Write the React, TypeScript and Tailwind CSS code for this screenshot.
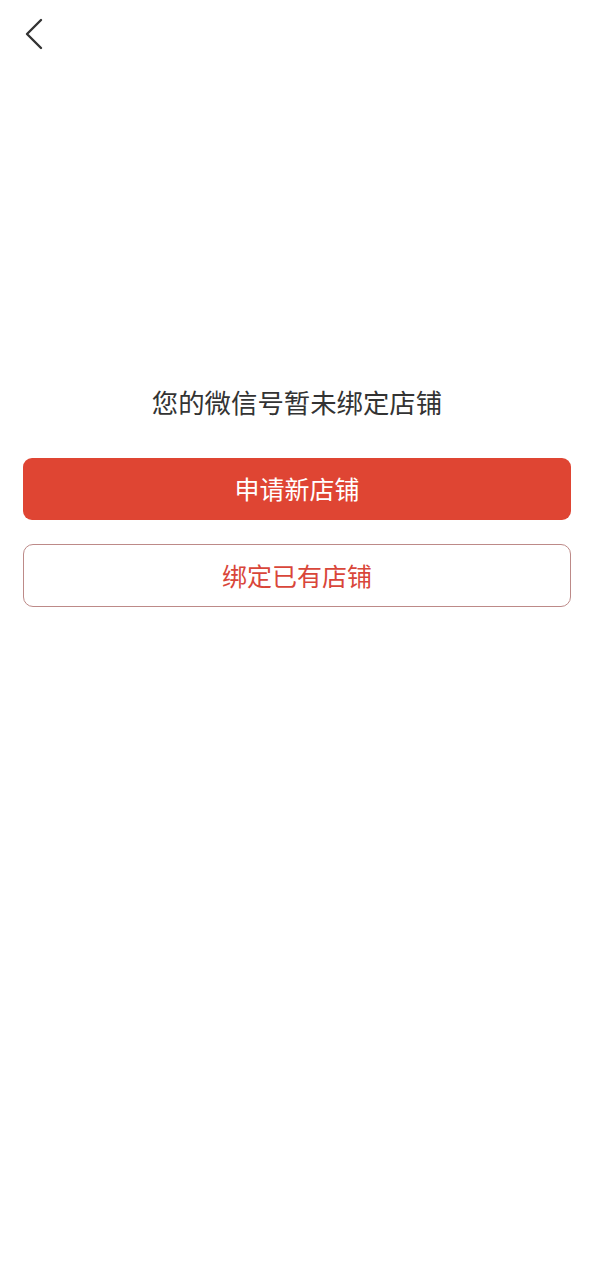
export default function App() {
  return (
    <div
      className="min-h-[1280px] w-full bg-white"
      style={{ fontFamily: '"Noto Sans CJK SC", "Noto Sans", sans-serif' }}
    >
      <header className="flex h-[68px] items-start px-[22px] pt-[18px]">
        <button className="flex h-[32px] w-[24px] items-center justify-center">
          <svg width="20" height="32" viewBox="0 0 20 32" fill="none">
            <path d="M17 2 L3 16 L17 30" stroke="#333333" strokeWidth="2.4" strokeLinecap="round" strokeLinejoin="round" />
          </svg>
        </button>
      </header>

      <main className="px-[23px] pt-[316px]">
        <p className="text-center text-[26.4px] leading-[36px] text-[#333333]">您的微信号暂未绑定店铺</p>

        <div className="mt-[38px] flex flex-col gap-[24px]">
          <button className="h-[62px] w-full rounded-[9px] bg-[#df4533] text-[25px] text-white">
            申请新店铺
          </button>
          <button className="h-[63px] w-full rounded-[10px] border border-[#bd8a88] bg-white text-[25px] text-[#d9463a]">
            绑定已有店铺
          </button>
        </div>
      </main>
    </div>
  );
}
